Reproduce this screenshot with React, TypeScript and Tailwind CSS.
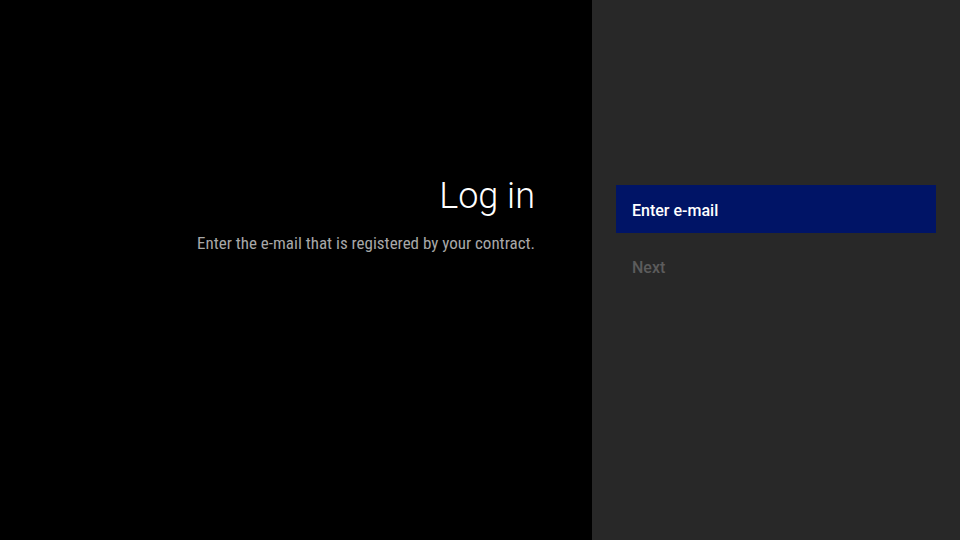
export default function App() {
  return (
    <div className="flex h-[540px] w-[960px] bg-black" style={{ fontFamily: "Roboto, 'Noto Sans', sans-serif" }}>
      {/* Guidance */}
      <div className="flex w-[592px] flex-col items-end pt-[172px] pr-[57px]">
        <h1 className="text-[36px] font-light leading-[48px] text-white">Log in</h1>
        <p className="mt-[12px] text-[17px] leading-[22px] text-[#a8a8a8] [font-stretch:condensed]">
          Enter the e-mail that is registered by your contract.
        </p>
      </div>

      {/* Actions */}
      <div className="flex flex-1 flex-col bg-[#282828] px-6 pt-[185px]">
        <button className="flex h-12 items-center bg-[#001466] px-4 pt-[4px] text-left text-[16px] font-medium text-white">
          Enter e-mail
        </button>
        <div className="mt-[25px] flex h-[20px] items-center px-4 text-[16px] font-medium text-[#5c5c5c]">Next</div>
      </div>
    </div>
  );
}
